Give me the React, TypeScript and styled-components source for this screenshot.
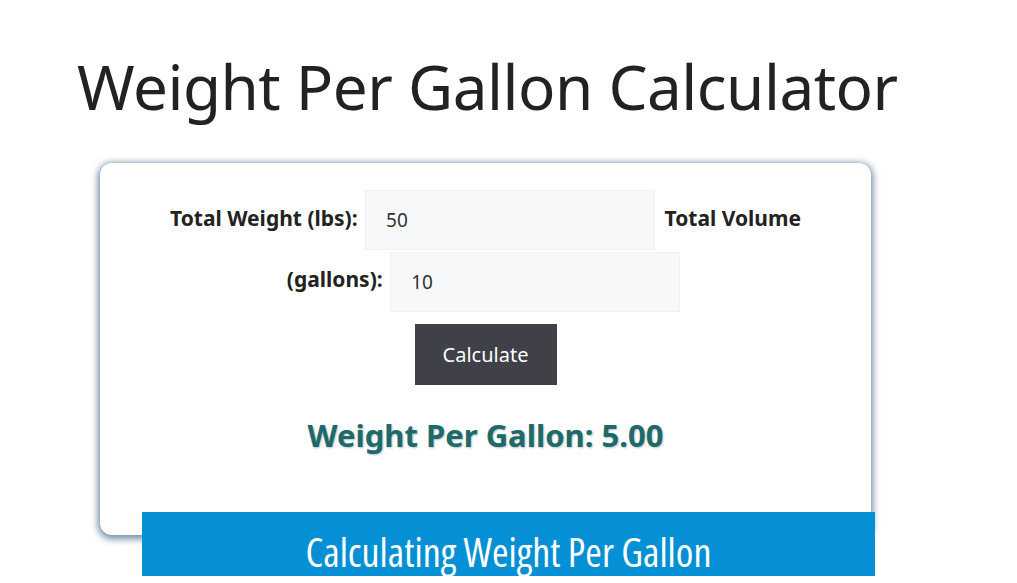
import React, { useState } from 'react';
import styled, { createGlobalStyle } from 'styled-components';

const GlobalStyle = createGlobalStyle`
  html, body {
    margin: 0;
    padding: 0;
    background: #ffffff;
    overflow: hidden;
  }
  body {
    font-family: 'Noto Sans', 'Open Sans', sans-serif;
  }
`;

const Page = styled.div`
  width: 1017px;
  height: 583px;
  padding: 39px 0 0 77px;
  box-sizing: border-box;
`;

const Title = styled.h1`
  margin: 0;
  font-family: 'Noto Sans', sans-serif;
  font-weight: 400;
  font-size: 62px;
  line-height: 94px;
  color: #222222;
  letter-spacing: -0.5px;
`;

const Card = styled.div`
  margin: 30px 0 0 23px;
  width: 771px;
  height: 372px;
  box-sizing: border-box;
  padding: 26px 0 0;
  background: #ffffff;
  border-radius: 12px;
  box-shadow: 0 2px 7px 2px rgba(60, 95, 140, 0.72);
  text-align: center;
`;

const Form = styled.div`
  width: 700px;
  margin: 0 auto;
  font-size: 21px;
  line-height: 59px;
`;

const Label = styled.label`
  font-weight: 700;
  color: #222222;
`;

const Input = styled.input`
  display: inline-block;
  vertical-align: middle;
  width: 290px;
  height: 60px;
  box-sizing: border-box;
  margin: 0 4px 0 2px;
  padding: 0 20px;
  border: 1px solid #f0f1f2;
  background: #f7f8f9;
  font-family: 'Noto Sans', sans-serif;
  font-size: 19px;
  color: #333333;
  outline: none;
`;

const Button = styled.button`
  display: block;
  margin: 12px auto 0;
  width: 142px;
  height: 61px;
  border: none;
  background: #404048;
  color: #ffffff;
  font-family: 'Noto Sans', sans-serif;
  font-size: 20px;
  cursor: pointer;
`;

const Result = styled.div`
  margin-top: 29px;
  font-size: 31px;
  font-weight: 700;
  color: #1c6a6b;
  text-shadow: 1px 1px 2px rgba(0, 0, 0, 0.25);
`;

const Banner = styled.div`
  position: relative;
  margin: -23px 0 0 65px;
  width: 733px;
  height: 64px;
  overflow: hidden;
  background: #0590d5;
  color: #ffffff;
  text-align: center;
  font-family: 'Open Sans', 'Noto Sans', sans-serif;
  font-stretch: 75%;
  font-size: 40px;
  line-height: 80px;
  font-weight: 400;
`;

const App: React.FC = () => {
  const [weight, setWeight] = useState('50');
  const [volume, setVolume] = useState('10');
  const [result, setResult] = useState('5.00');

  const calculate = () => {
    const w = parseFloat(weight);
    const v = parseFloat(volume);
    if (!isNaN(w) && !isNaN(v) && v !== 0) setResult((w / v).toFixed(2));
  };

  return (
    <Page>
      <GlobalStyle />
      <Title>Weight Per Gallon Calculator</Title>
      <Card>
        <Form>
          <Label htmlFor="weight">Total Weight (lbs):</Label>{' '}
          <Input id="weight" value={weight} onChange={e => setWeight(e.target.value)} />{' '}
          <Label htmlFor="volume">Total Volume (gallons):</Label>{' '}
          <Input id="volume" value={volume} onChange={e => setVolume(e.target.value)} />
        </Form>
        <Button onClick={calculate}>Calculate</Button>
        <Result>Weight Per Gallon: {result}</Result>
      </Card>
      <Banner>Calculating Weight Per Gallon</Banner>
    </Page>
  );
};

export default App;
